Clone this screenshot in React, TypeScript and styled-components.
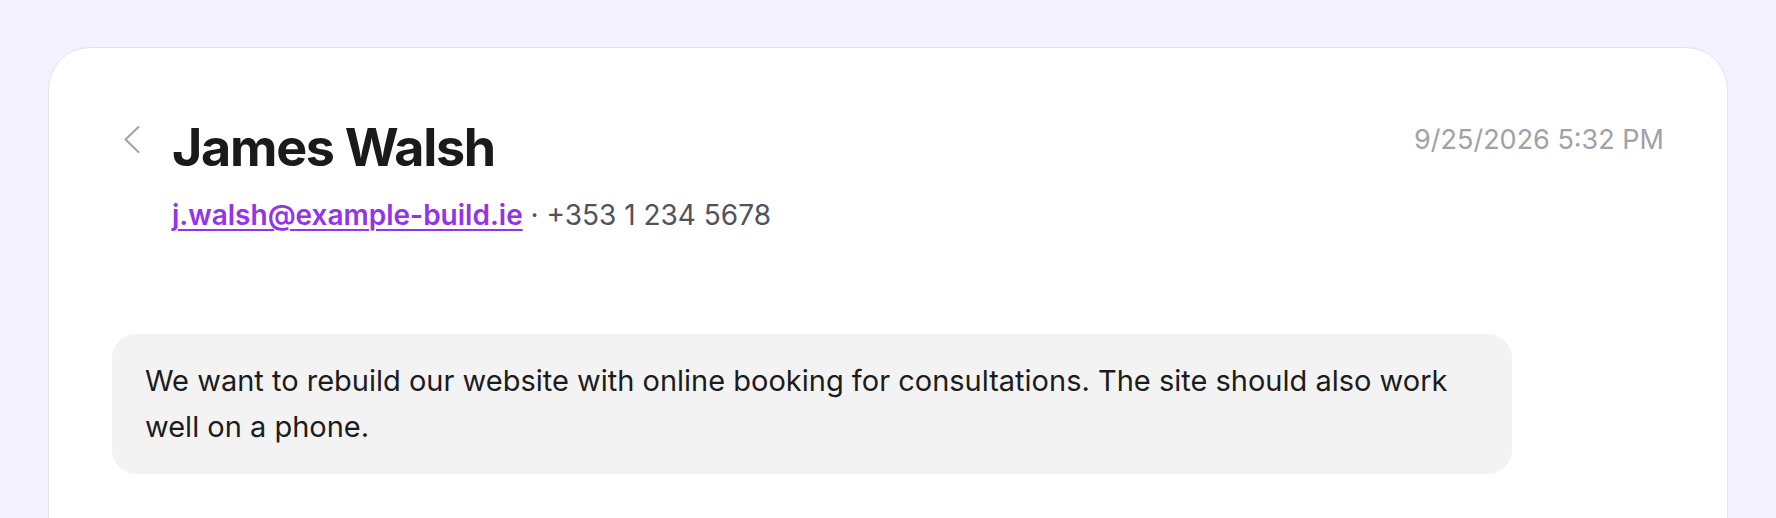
import React from "react";
import styled, { createGlobalStyle } from "styled-components";

const GlobalStyle = createGlobalStyle`
  html, body {
    margin: 0;
    padding: 0;
    background: #f4f2fe;
    font-family: Inter, "Noto Sans", sans-serif;
    -webkit-font-smoothing: antialiased;
  }
  * { box-sizing: border-box; }
`;

const Page = styled.div`
  padding: 47px 48px 0 48px;
  min-height: 518px;
`;

const Card = styled.div`
  background: #ffffff;
  border: 1px solid #e3e3ea;
  border-radius: 42px;
  padding: 64px 63px 64px 63px;
  min-height: 600px;
`;

const Header = styled.header`
  display: flex;
  align-items: flex-start;
  justify-content: space-between;
  margin-bottom: 103px;
`;

const Left = styled.div`
  display: flex;
  align-items: flex-start;
  gap: 20px;
`;

const BackButton = styled.button`
  width: 40px;
  height: 54px;
  border: none;
  background: transparent;
  padding: 0;
  display: flex;
  align-items: center;
  justify-content: center;
  cursor: pointer;
  color: #a1a1aa;
`;

const Identity = styled.div`
  display: flex;
  flex-direction: column;
  padding-top: 5px;
`;

const Name = styled.h1`
  margin: 0;
  font-size: 52px;
  line-height: 62px;
  font-weight: 700;
  letter-spacing: -1.3px;
  color: #1a1a1a;
`;

const Contact = styled.div`
  margin-top: 20px;
  font-size: 28px;
  line-height: 32px;
  color: #52525b;
`;

const Email = styled.a`
  color: #9333ea;
  font-weight: 600;
  text-decoration: underline;
  text-underline-offset: 4px;
  text-decoration-thickness: 2px;
`;

const Timestamp = styled.div`
  margin-top: 12px;
  font-size: 27px;
  line-height: 32px;
  color: #a1a1aa;
  white-space: nowrap;
`;

const Bubble = styled.div`
  width: 1400px;
  background: #f3f3f3;
  border-radius: 24px;
  padding: 24px 32px 24px 33px;
  font-size: 29px;
  line-height: 46px;
  color: #1c1c1c;
`;

export default function App() {
  return (
    <>
      <GlobalStyle />
      <Page>
        <Card>
          <Header>
            <Left>
              <BackButton aria-label="Back">
                <svg width="16" height="27" viewBox="0 0 16 27" fill="none">
                  <polyline
                    points="14.5,1 1.5,13.5 14.5,26"
                    stroke="currentColor"
                    strokeWidth="2"
                    strokeLinecap="round"
                    strokeLinejoin="round"
                  />
                </svg>
              </BackButton>
              <Identity>
                <Name>James Walsh</Name>
                <Contact>
                  <Email href="#">j.walsh@example-build.ie</Email> · +353 1 234 5678
                </Contact>
              </Identity>
            </Left>
            <Timestamp>9/25/2026 5:32 PM</Timestamp>
          </Header>
          <Bubble>
            We want to rebuild our website with online booking for consultations. The site should
            also work well on a phone.
          </Bubble>
        </Card>
      </Page>
    </>
  );
}
